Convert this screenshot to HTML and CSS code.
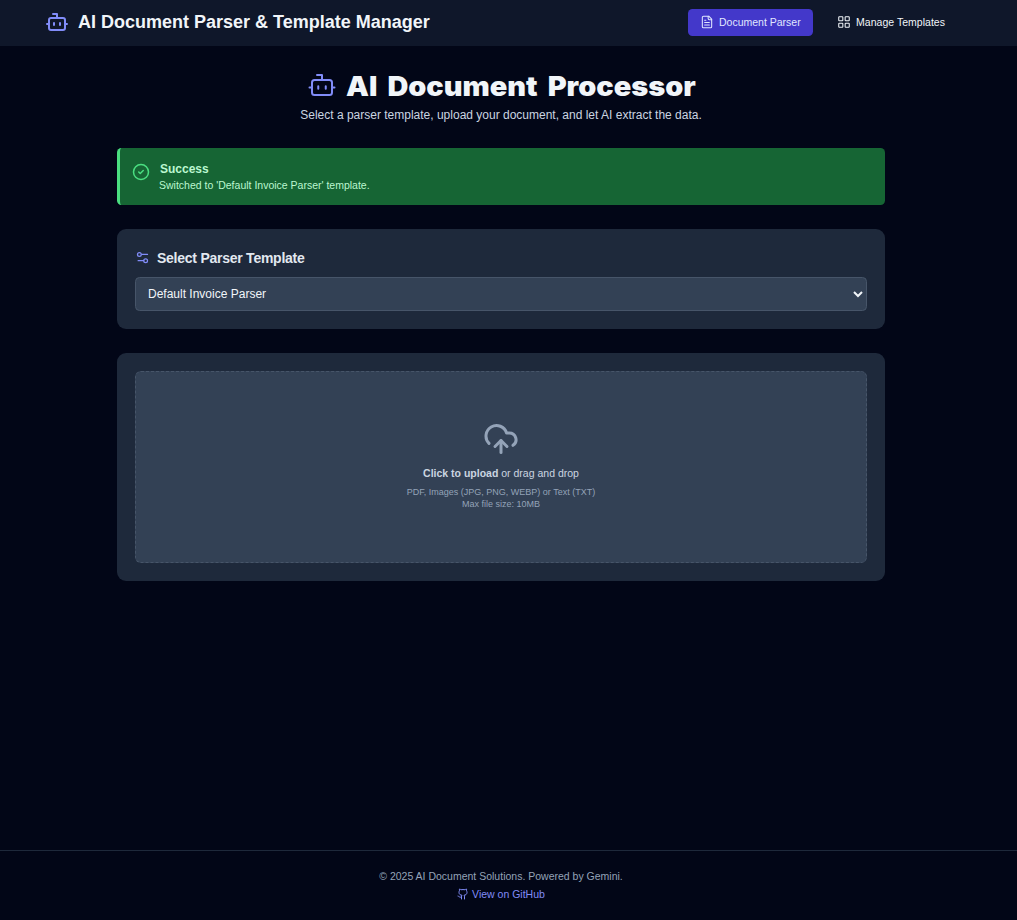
FILE: index.html
```html
<!DOCTYPE html>
<html lang="en">
<head>
<meta charset="utf-8">
<title>AI Document Parser &amp; Template Manager</title>
<link rel="stylesheet" href="styles.css">
</head>
<body>
<header class="topbar">
  <div class="brand">
    <svg class="icon icon-brand" viewBox="0 0 24 24"><path d="M12 8V4H8"/><rect width="16" height="12" x="4" y="8" rx="2"/><path d="M2 14h2M20 14h2M15 13v2M9 13v2"/></svg>
    <span class="brand-name">AI Document Parser &amp; Template Manager</span>
  </div>
  <nav class="nav">
    <a class="nav-item active"><svg class="icon icon-nav" viewBox="0 0 24 24"><path d="M15 2H6a2 2 0 0 0-2 2v16a2 2 0 0 0 2 2h12a2 2 0 0 0 2-2V7Z"/><path d="M14 2v4a2 2 0 0 0 2 2h4M10 9H8M16 13H8M16 17H8"/></svg><span class="nav-parser">Document Parser</span></a>
    <a class="nav-item"><svg class="icon icon-nav" viewBox="0 0 24 24"><rect width="7" height="7" x="3" y="3" rx="1"/><rect width="7" height="7" x="14" y="3" rx="1"/><rect width="7" height="7" x="14" y="14" rx="1"/><rect width="7" height="7" x="3" y="14" rx="1"/></svg><span class="nav-manage">Manage Templates</span></a>
  </nav>
</header>
<main class="content">
  <section class="hero">
    <h1 class="hero-title"><svg class="icon icon-hero" viewBox="0 0 24 24"><path d="M12 8V4H8"/><rect width="16" height="12" x="4" y="8" rx="2"/><path d="M2 14h2M20 14h2M15 13v2M9 13v2"/></svg><span class="hero-text">AI Document Processor</span></h1>
    <p class="hero-sub">Select a parser template, upload your document, and let AI extract the data.</p>
  </section>
  <section class="alert">
    <svg class="icon icon-alert" viewBox="0 0 24 24"><circle cx="12" cy="12" r="10"/><path d="m9 12 2 2 4-4"/></svg>
    <div class="alert-body">
      <p class="alert-title">Success</p>
      <p class="alert-text">Switched to 'Default Invoice Parser' template.</p>
    </div>
  </section>
  <section class="card">
    <h2 class="card-title"><svg class="icon icon-card" viewBox="0 0 24 24"><path d="M20 7h-9M14 17H5"/><circle cx="17" cy="17" r="3"/><circle cx="7" cy="7" r="3"/></svg><span class="card-label">Select Parser Template</span></h2>
    <select class="picker"><option>Default Invoice Parser</option></select>
  </section>
  <section class="card">
    <div class="dropzone">
      <svg class="icon icon-cloud" viewBox="0 0 24 24"><path d="M12 13v8"/><path d="M4 14.899A7 7 0 1 1 15.71 8h1.79a4.5 4.5 0 0 1 2.5 8.242"/><path d="m8 17 4-4 4 4"/></svg>
      <p class="drop-main"><b>Click to upload</b> or drag and drop</p>
      <p class="drop-hint">PDF, Images (JPG, PNG, WEBP) or Text (TXT)</p>
      <p class="drop-hint drop-size">Max file size: 10MB</p>
    </div>
  </section>
</main>
<footer class="footer">
  <p class="copyright">© 2025 AI Document Solutions. Powered by Gemini.</p>
  <a class="github"><svg class="icon icon-github" viewBox="0 0 24 24"><path d="M15 22v-4a4.8 4.8 0 0 0-1-3.5c3 0 6-2 6-5.5.08-1.25-.27-2.48-1-3.5.28-1.15.28-2.35 0-3.5 0 0-1 0-3 1.5-2.64-.5-5.36-.5-8 0C6 2 5 2 5 2c-.3 1.15-.3 2.35 0 3.5A5.403 5.403 0 0 0 4 9c0 3.5 3 5.5 6 5.5-.39.49-.68 1.05-.85 1.65-.17.6-.22 1.23-.15 1.85v4"/><path d="M9 18c-4.51 2-5-2-7-2"/></svg><span>View on GitHub</span></a>
</footer>
</body>
</html>
```
FILE: styles.css
```css
* { box-sizing: border-box; }
body {
  margin: 0;
  min-height: 920px;
  display: flex;
  flex-direction: column;
  background: #020617;
  color: #f1f5f9;
  font-family: "Liberation Sans", Arial, sans-serif;
  font-size: 12px;
  line-height: 18px;
}
h1, h2, p { margin: 0; }
.icon {
  flex: none;
  fill: none;
  stroke: currentColor;
  stroke-width: 2;
  stroke-linecap: round;
  stroke-linejoin: round;
}
.topbar {
  height: 46px;
  padding: 0 60px 2px 45px;
  display: flex;
  align-items: center;
  justify-content: space-between;
  background: #0f172a;
}
.brand { display: flex; align-items: center; gap: 9px; }
.icon-brand { width: 24px; height: 24px; color: #818cf8; }
.brand-name { font-size: 18px; font-weight: 700; line-height: 24px; }
.nav { display: flex; gap: 12px; }
.nav-item {
  display: flex;
  align-items: center;
  gap: 5px;
  height: 27px;
  padding: 0 12px;
  border-radius: 4.5px;
  font-size: 10.5px;
  white-space: nowrap;
  color: #f1f5f9;
}
.nav-item.active { background: #4338ca; color: #e0e7ff; }
.icon-nav { width: 14px; height: 14px; margin-bottom: 1px; stroke-width: 1.8; }
.nav-parser { width: 82px; }
.nav-manage { width: 89px; letter-spacing: 0.03px; }
.content {
  flex: 1;
  width: 768px;
  margin-left: 117px;
  padding-top: 24px;
}
.hero { height: 78px; text-align: center; }
.hero-title {
  display: flex;
  align-items: center;
  justify-content: center;
  gap: 9px;
  height: 30px;
}
.icon-hero { width: 30px; height: 30px; color: #818cf8; stroke-width: 1.6; }
.hero-text {
  width: 349px;
  padding-top: 3px;
  font-family: Inter, sans-serif;
  font-size: 27px;
  font-weight: 900;
  line-height: 30px;
  word-spacing: 4px;
  text-align: left;
  white-space: nowrap;
  transform: scaleX(1.07);
  transform-origin: left center;
}
.hero-sub { margin-top: 6px; color: #cbd5e1; }
.alert {
  display: flex;
  gap: 9px;
  height: 57px;
  padding: 12px;
  border-left: 3px solid #4ade80;
  border-radius: 4.5px;
  background: #166534;
  color: #bbf7d0;
}
.icon-alert { width: 18px; height: 18px; margin-top: 3px; color: #4ade80; }
.alert-title { padding-left: 1px; font-weight: 700; }
.alert-text { font-size: 10.5px; line-height: 15px; }
.card {
  margin-top: 24px;
  padding: 18px;
  border-radius: 9px;
  background: #1e293b;
}
.card-title {
  display: flex;
  align-items: center;
  gap: 7px;
  height: 21px;
  margin-bottom: 9px;
  font-size: 14px;
  color: #e2e8f0;
}
.card-label { letter-spacing: -0.25px; }
.icon-card { width: 15px; height: 15px; color: #818cf8; }
.picker {
  display: block;
  width: 100%;
  height: 34px;
  padding: 0 8px 1px;
  border: 1px solid #475569;
  border-radius: 4.5px;
  background-color: #334155;
  color: #f1f5f9;
  font-family: inherit;
  font-size: 12px;
}
.dropzone {
  height: 192px;
  display: flex;
  flex-direction: column;
  align-items: center;
  padding-top: 49px;
  border: 1px dashed #475569;
  border-radius: 6px;
  background: #334155;
}
.icon-cloud { width: 36px; height: 36px; color: #94a3b8; }
.drop-main { margin-top: 9px; font-size: 10.5px; line-height: 15px; color: #cbd5e1; }
.drop-hint { font-size: 9px; line-height: 12px; color: #94a3b8; }
.drop-main + .drop-hint { margin-top: 5px; }
.footer {
  height: 70px;
  padding: 18px 15px 0 0;
  border-top: 1px solid #1e293b;
  display: flex;
  flex-direction: column;
  align-items: center;
  gap: 3px;
  font-size: 10.5px;
  line-height: 15px;
  color: #94a3b8;
}
.github { display: flex; align-items: center; gap: 3px; color: #818cf8; }
.icon-github { width: 12px; height: 12px; margin-bottom: 2px; }
```
